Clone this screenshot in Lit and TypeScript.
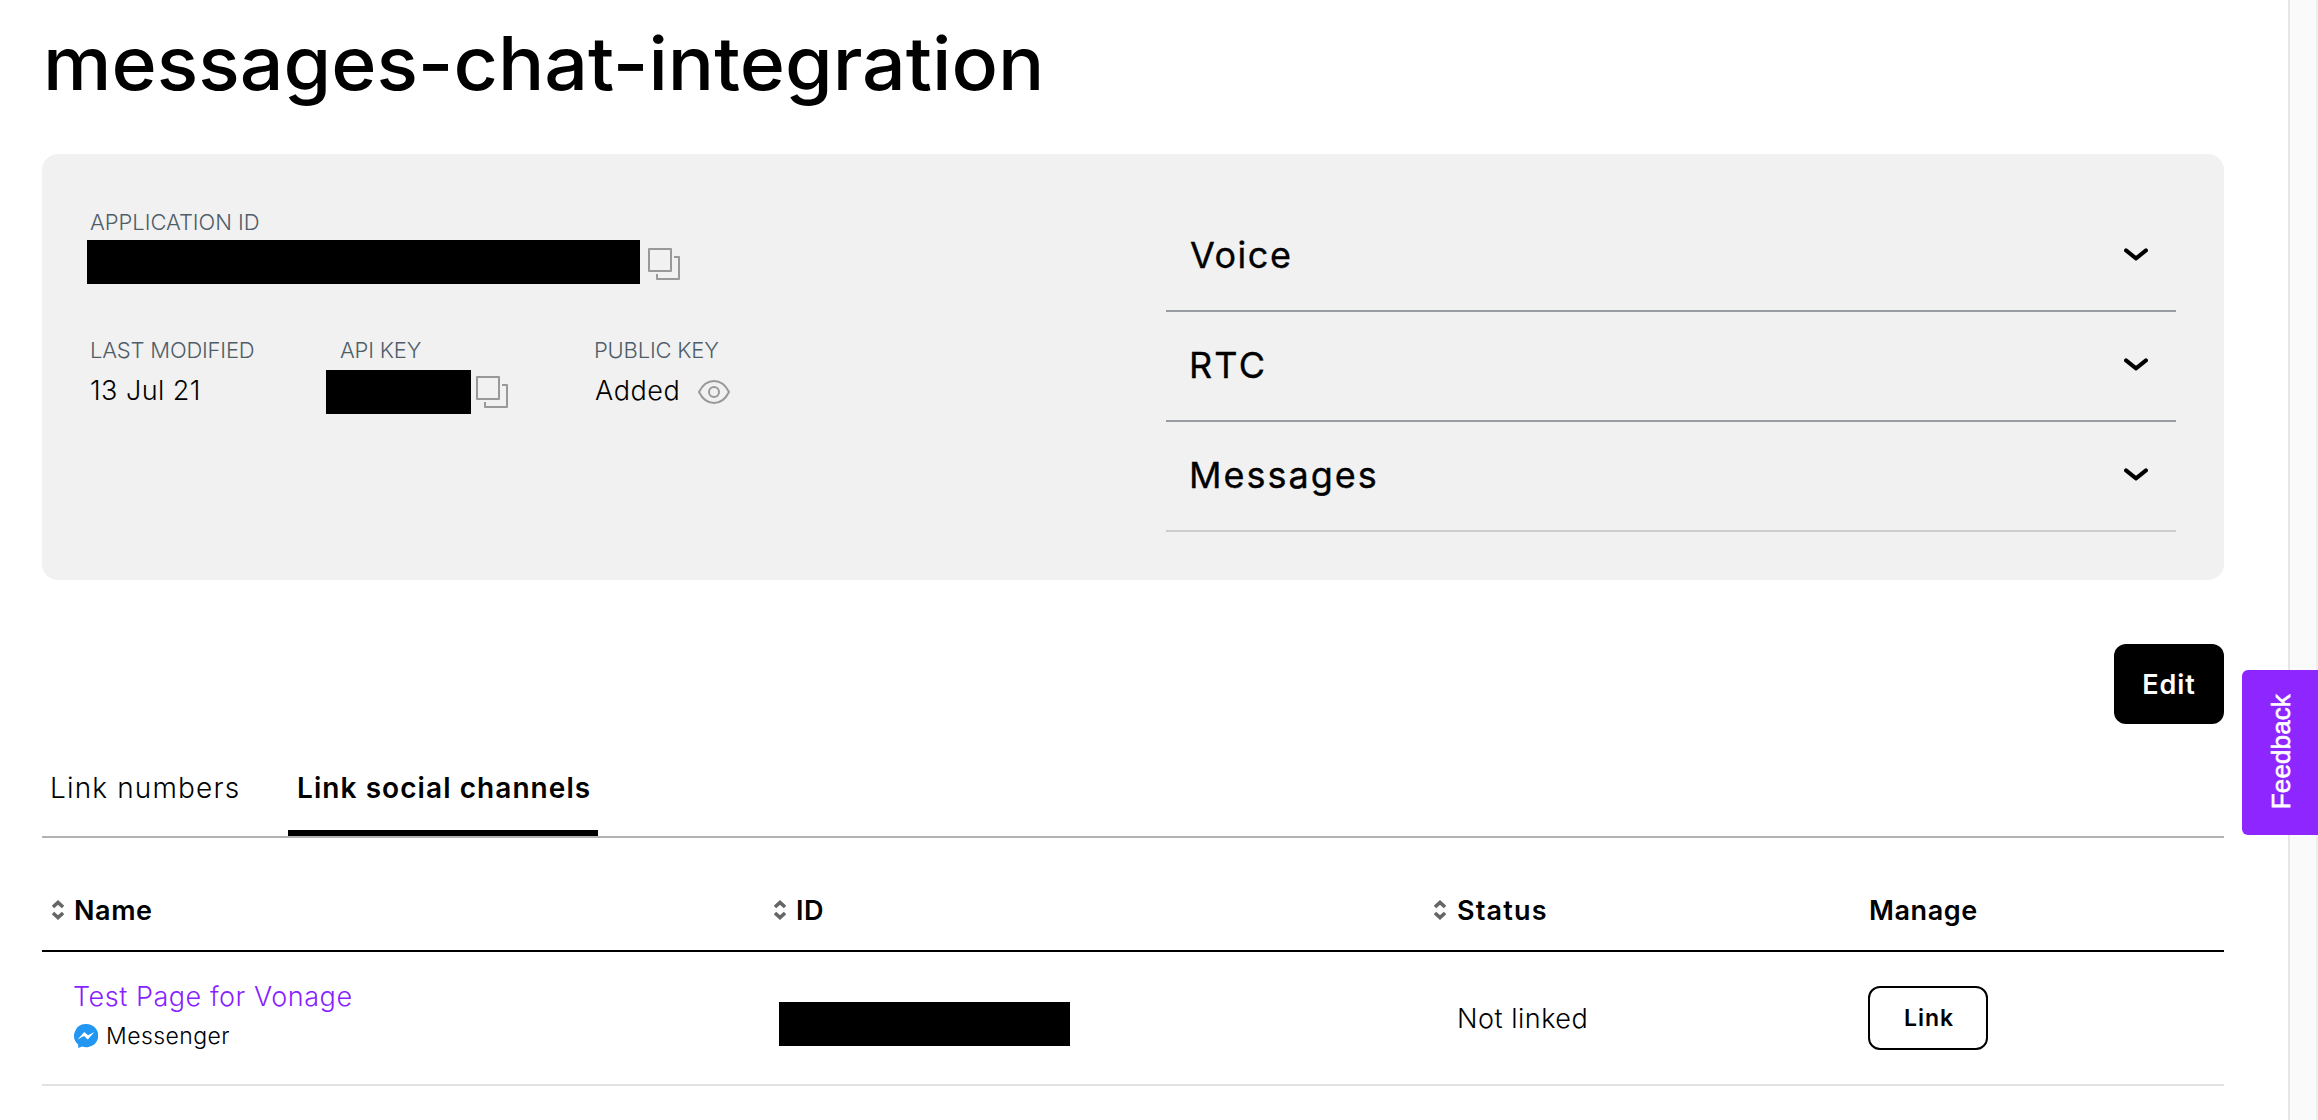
import { LitElement, html, css } from "lit";
import { customElement } from "lit/decorators.js";

const copyIcon = html`<svg class="copy" width="32" height="32" viewBox="0 0 32 32" fill="none" stroke="#999" stroke-width="2" stroke-linejoin="round">
  <rect x="1" y="1" width="22" height="22" />
  <path d="M26 9h5v22H9v-5" />
</svg>`;

const eyeIcon = html`<svg class="eye" width="32" height="24" viewBox="0 0 32 24" fill="none" stroke="#999" stroke-width="2">
  <path d="M1 12C4.500 5 10 1 16 1s11.500 4 15 11c-3.500 7-9 11-15 11S4.500 19 1 12z" stroke-linejoin="round" />
  <circle cx="16" cy="12" r="5" />
</svg>`;

const chevron = html`<svg class="chevron" width="24" height="13" viewBox="0 0 24 13" fill="none" stroke="#000" stroke-width="4" stroke-linecap="round" stroke-linejoin="round">
  <path d="M2 2.400l10 8 10-8" />
</svg>`;

const sortIcon = html`<svg class="sort" width="12" height="20" viewBox="0 0 12 20" fill="none" stroke="#666" stroke-width="3.500">
  <path d="M1 7l5-4.600L11 7M1 13l5 4.600 5-4.600" />
</svg>`;

const messengerIcon = html`<svg width="24" height="24" viewBox="0 0 24 24">
  <path fill="#2196f3" d="M12 0a12 11.600 0 1 1-3.800 22.500L4.200 24v-3.600A11.600 11.600 0 0 1 12 0z" />
  <path fill="#fff" d="M3.600 15.400l6.600-7.400 3.800 3.200 6.400-3.200-6.600 7.400-3.800-3.300z" />
</svg>`;

@customElement("app-root")
export class AppRoot extends LitElement {
  static styles = css`
    :host { display: block; font-family: Inter, "Liberation Sans", sans-serif; color: #000; }
    * { box-sizing: border-box; }
    svg { display: block; flex: none; }
    .screen { display: flex; height: 1120px; overflow: hidden; background: #fff; position: relative; }
    .page { width: 2288px; padding: 0 64px 0 42px; }
    .gutter { width: 30px; background: #fafafa; border-left: 2px solid #e6e6e6; border-right: 2px solid #eee; }
    h1 { margin: 0 0 28px 1px; font-size: 74px; line-height: 126px; font-weight: 500; white-space: nowrap; transform: scaleX(1.041); transform-origin: left; width: 1000px; }

    .card { display: flex; justify-content: space-between; height: 426px; padding: 48px 48px 0 47px; border-radius: 16px; background: #f1f1f1; }
    .details { padding-top: 7px; }
    .label { font-size: 22px; line-height: 26px; font-weight: 300; letter-spacing: -0.2px; color: #4f5d69; white-space: nowrap; }
    .label.tight { letter-spacing: -0.2px; }
    .application .label { padding-left: 1px; letter-spacing: -0.05px; }
    .value { display: flex; align-items: center; height: 44px; font-size: 27px; font-weight: 350; letter-spacing: 0.45px; white-space: nowrap; }
    .value span { margin-top: -4px; }
    .application .value { margin: 5px 0 53px -2px; }
    .application .copy { margin: 4px 0 0 8px; }
    .redacted { background: #000; height: 44px; }
    .redacted.app { width: 553px; }
    .redacted.key { width: 145px; }
    .redacted.id { width: 291px; }
    .facts { display: grid; grid-template-columns: 237px 268px 200px; row-gap: 7px; }
    .modified { padding-left: 1px; }
    .key-label { padding-left: 14px; }
    .key-value .copy { margin-left: 5px; }
    .added { padding-left: 1px; letter-spacing: 0.6px; }
    .facts .eye { margin-left: 18px; }

    .accordion { width: 1010px; }
    .section { display: flex; justify-content: space-between; align-items: center; height: 110px; padding: 0 28px 0 24px; border-bottom: 2px solid #999ba3; font-size: 36px; font-weight: 400; -webkit-text-stroke: 0.35px #000; }
    .section:last-child { border-color: #ccc; }
    .section span { margin-top: -3px; }
    .section .chevron { margin-top: -3px; }
    .voice { letter-spacing: 1.5px; }
    .rtc { letter-spacing: 2.2px; margin-left: -1px; }
    .messages { letter-spacing: 2px; margin-left: -1px; }

    .actions { display: flex; justify-content: flex-end; padding-top: 64px; }
    .edit { width: 110px; height: 80px; border-radius: 12px; background: #000; color: #fff; display: flex; align-items: center; justify-content: center; font-size: 27px; font-weight: 600; letter-spacing: 0.9px; }

    .tabs { display: flex; height: 114px; padding-top: 16px; border-bottom: 2px solid #b3b3b3; font-size: 28px; line-height: 96px; white-space: nowrap; }
    .tab { padding-left: 8px; width: 246px; font-weight: 300; letter-spacing: 1.15px; }
    .tab.active { padding-left: 9px; width: 310px; font-weight: 600; letter-spacing: 1.07px; border-bottom: 6px solid #000; }

    .row { display: grid; grid-template-columns: 722px 660px 416px 1fr; font-size: 27px; align-items: center; }
    .head { height: 114px; padding-top: 32px; border-bottom: 2px solid #000; font-weight: 600; letter-spacing: 0.6px; }
    .head > div { display: flex; align-items: center; height: 30px; }
    .head .sort { margin: 0 10px; }
    .head > div.manage { padding-left: 29px; }
    .head > .status-head { letter-spacing: 1.2px; }
    .head > .status-head .sort { margin-right: 11px; }
    .body { height: 134px; border-bottom: 2px solid #e2e2e2; font-weight: 300; }
    .name { padding-left: 32px; margin-top: -4px; }
    .name a { display: block; line-height: 32px; margin-left: -1px; color: #871fff; letter-spacing: 0.53px; }
    .channel { display: flex; align-items: center; gap: 8px; margin-top: 7px; font-size: 23px; line-height: 32px; letter-spacing: 0.43px; }
    .body .redacted { margin: 12px 0 0 15px; }
    .status { padding-left: 33px; letter-spacing: 0.5px; }
    .link { width: 120px; height: 64px; margin-left: 28px; padding-left: 2px; border: 2px solid #000; border-radius: 12px; display: flex; align-items: center; justify-content: center; font-size: 23px; font-weight: 600; letter-spacing: 0.9px; }

    .feedback { position: absolute; right: 0; top: 670px; width: 76px; height: 165px; border-radius: 6px 0 0 6px; background: #8e27ff; color: #fff; display: flex; align-items: center; justify-content: center; }
    .feedback span { margin: 0 0 1px 2px; writing-mode: vertical-rl; transform: rotate(180deg); font: 26px "Liberation Sans", Arial, sans-serif; letter-spacing: 0.12px; -webkit-text-stroke: 0.6px #fff; }
  `;

  render() {
    return html`<div class="screen">
      <main class="page">
        <h1>messages-chat-integration</h1>
        <section class="card">
          <div class="details">
            <div class="application">
              <div class="label">APPLICATION ID</div>
              <div class="value"><div class="redacted app"></div>${copyIcon}</div>
            </div>
            <div class="facts">
              <div class="label modified">LAST MODIFIED</div>
              <div class="label tight key-label">API KEY</div>
              <div class="label tight">PUBLIC KEY</div>
              <div class="value modified"><span>13 Jul 21</span></div>
              <div class="value key-value"><div class="redacted key"></div>${copyIcon}</div>
              <div class="value added"><span>Added</span>${eyeIcon}</div>
            </div>
          </div>
          <div class="accordion">
            ${["Voice", "RTC", "Messages"].map(
              (name) => html`<div class="section"><span class=${name.toLowerCase()}>${name}</span>${chevron}</div>`
            )}
          </div>
        </section>
        <div class="actions"><div class="edit">Edit</div></div>
        <nav class="tabs">
          <div class="tab">Link numbers</div>
          <div class="tab active">Link social channels</div>
        </nav>
        <div class="row head">
          <div>${sortIcon}Name</div>
          <div>${sortIcon}ID</div>
          <div class="status-head">${sortIcon}Status</div>
          <div class="manage">Manage</div>
        </div>
        <div class="row body">
          <div class="name"><a>Test Page for Vonage</a><div class="channel">${messengerIcon}Messenger</div></div>
          <div><div class="redacted id"></div></div>
          <div class="status">Not linked</div>
          <div><div class="link">Link</div></div>
        </div>
      </main>
      <div class="gutter"></div>
      <div class="feedback"><span>Feedback</span></div>
    </div>`;
  }
}
